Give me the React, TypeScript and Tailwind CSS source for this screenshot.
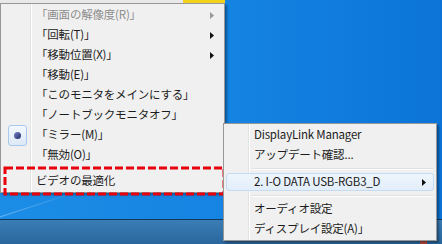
import React from "react";

type Item = { label: string; arrow?: boolean; disabled?: boolean; radio?: boolean };

const leftItems: Item[] = [
  { label: "「画面の解像度(R)」", arrow: true, disabled: true },
  { label: "「回転(T)」", arrow: true },
  { label: "「移動位置(X)」", arrow: true },
  { label: "「移動(E)」" },
  { label: "「このモニタをメインにする」" },
  { label: "「ノートブックモニタオフ」" },
  { label: "「ミラー(M)」", radio: true },
  { label: "「無効(O)」" },
];

const font = { fontFamily: '"Noto Sans CJK JP", "Noto Sans", sans-serif' };

function Arrow({ gray }: { gray?: boolean }) {
  return (
    <svg width="4" height="7" viewBox="0 0 4 7" className="shrink-0">
      <path d="M0 0 L4 3.5 L0 7 Z" fill={gray ? "#9a9a9a" : "#111"} />
    </svg>
  );
}

function Row({ item, gutter }: { item: Item; gutter: number }) {
  return (
    <div className="flex h-[20px] items-center">
      <div className="flex h-full shrink-0 items-center justify-center" style={{ width: gutter }}>
        {item.radio && (
          <div className="ml-[2px] flex h-[21px] w-[19px] items-center justify-center rounded-[3px] border border-[#a8c9ee] bg-gradient-to-b from-[#f3f8fd] to-[#dde9f7]">
            <div className="h-[7px] w-[7px] rounded-full bg-gradient-to-br from-[#7a86c8] to-[#1f2a6b]" />
          </div>
        )}
      </div>
      <span
        className={`flex-1 pl-[4px] text-[11.5px] leading-none tracking-[-0.2px] ${item.disabled ? "text-[#8d8d8d]" : "text-[#1c1c1c]"}`}
      >
        {item.label}
      </span>
      {item.arrow && (
        <div className="pr-[10px]">
          <Arrow gray={item.disabled} />
        </div>
      )}
    </div>
  );
}

function Sep({ gutter, h }: { gutter: number; h: number }) {
  return (
    <div className="flex items-center" style={{ height: h, paddingLeft: gutter + 2 }}>
      <div className="mr-[3px] flex-1 border-t border-b border-t-[#e0e0e0] border-b-white" />
    </div>
  );
}

export default function App() {
  return (
    <div className="relative flex h-[244px] w-[442px] flex-col overflow-hidden" style={font}>
      {/* desktop */}
      <div className="relative flex-1 bg-gradient-to-r from-[#1c8de6] via-[#1584e2] to-[#0c74d8]">
        <div className="absolute left-[-20px] top-[205px] h-[1px] w-[110px] -rotate-[18deg] bg-gradient-to-r from-[#7fc0f3] to-transparent opacity-80" />
        <div className="absolute left-[183px] top-0 h-[4px] w-[42px] bg-[#f2d21a]" />
        <div className="absolute left-0 top-0 h-[4px] w-[183px] bg-[#e9e9e9]" />
      </div>
      {/* taskbar */}
      <div className="h-[25px] border-t border-t-[#12385c] bg-gradient-to-b from-[#3a7db5] to-[#2a679c]">
        <div className="ml-[420px] mt-[19px] h-[5px] w-[7px] bg-[#b84a40]" />
      </div>

      {/* left menu */}
      <div className="absolute left-0 top-[3px] h-[190px] w-[225px] border border-[#979797] bg-[#f0f0f0] pt-[1px] shadow-[2px_2px_2px_rgba(0,0,0,0.35)]">
        <div className="absolute bottom-0 left-[29px] top-0 w-[2px] border-l border-r border-l-[#e2e3e3] border-r-white" />
        <div className="relative">
          {leftItems.map((it) => (
            <Row key={it.label} item={it} gutter={31} />
          ))}
          <div className="h-[6px]" />
          <Row item={{ label: "ビデオの最適化" }} gutter={31} />
        </div>
      </div>

      {/* red dashed annotation */}
      <svg className="absolute left-[3px] top-[166px]" width="223" height="30" viewBox="0 0 223 30">
        <rect x="2" y="2" width="219" height="26" fill="none" stroke="#e8000b" strokeWidth="3" strokeDasharray="8 3" />
      </svg>

      {/* right menu */}
      <div className="absolute left-[223px] top-[123px] h-[118px] w-[214px] border border-[#979797] bg-[#f0f0f0] pt-[1px] shadow-[2px_2px_2px_rgba(0,0,0,0.35)]">
        <div className="absolute bottom-0 left-[24px] top-0 w-[2px] border-l border-r border-l-[#e2e3e3] border-r-white" />
        <div className="relative">
          <Row item={{ label: "DisplayLink Manager" }} gutter={26} />
          <Row item={{ label: "アップデート確認..." }} gutter={26} />
          <Sep gutter={26} h={7} />
          <div className="relative">
            <div className="absolute inset-x-[2px] inset-y-[1px] rounded-[3px] border border-[#c3dcf4] bg-gradient-to-b from-[#eef5fc] to-[#e2eefa]" />
            <div className="relative">
              <Row item={{ label: "2. I-O DATA USB-RGB3_D", arrow: true }} gutter={26} />
            </div>
          </div>
          <Sep gutter={26} h={7} />
          <Row item={{ label: "オーディオ設定" }} gutter={26} />
          <Row item={{ label: "ディスプレイ設定(A)」" }} gutter={26} />
        </div>
      </div>
    </div>
  );
}
